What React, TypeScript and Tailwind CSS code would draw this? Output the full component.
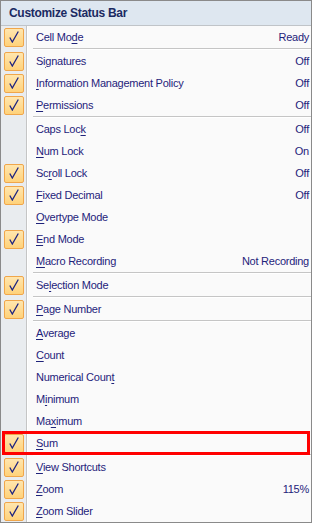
import React from "react";

type Item = {
  label: string;
  key: number; // index of underlined char
  value?: string;
  checked?: boolean;
  sep?: boolean; // separator after
  mark?: boolean;
};

const items: Item[] = [
  { label: "Cell Mode", key: 7, value: "Ready", checked: true, sep: true },
  { label: "Signatures", key: 2, value: "Off", checked: true },
  { label: "Information Management Policy", key: 0, value: "Off", checked: true },
  { label: "Permissions", key: 0, value: "Off", checked: true, sep: true },
  { label: "Caps Lock", key: 8, value: "Off" },
  { label: "Num Lock", key: 0, value: "On" },
  { label: "Scroll Lock", key: 2, value: "Off", checked: true },
  { label: "Fixed Decimal", key: 0, value: "Off", checked: true },
  { label: "Overtype Mode", key: 0 },
  { label: "End Mode", key: 0, checked: true },
  { label: "Macro Recording", key: 0, value: "Not Recording", sep: true },
  { label: "Selection Mode", key: 2, checked: true, sep: true },
  { label: "Page Number", key: 0, checked: true, sep: true },
  { label: "Average", key: 0 },
  { label: "Count", key: 0 },
  { label: "Numerical Count", key: 14 },
  { label: "Minimum", key: 1 },
  { label: "Maximum", key: 2 },
  { label: "Sum", key: 0, checked: true, sep: true, mark: true },
  { label: "View Shortcuts", key: 0, checked: true },
  { label: "Zoom", key: 0, value: "115%", checked: true },
  { label: "Zoom Slider", key: 0, checked: true },
];

function Label({ text, k }: { text: string; k: number }) {
  return (
    <span>
      {text.slice(0, k)}
      <span className="underline underline-offset-[2px]">{text.charAt(k)}</span>
      {text.slice(k + 1)}
    </span>
  );
}

function Check() {
  return (
    <div className="w-[20px] h-[19px] border border-[#f0a64a] rounded-[2px] bg-gradient-to-b from-[#ffe6ae] to-[#ffd27a] flex items-center justify-center">
      <svg width="10" height="12" viewBox="0 0 10 12">
        <polyline points="0.8,6.5 3.3,11 9.3,0.5" fill="none" stroke="#1d2380" strokeWidth="1.3" />
      </svg>
    </div>
  );
}

function Row({ item }: { item: Item }) {
  return (
    <div className="flex h-[22px]">
      <div className="w-[26px] shrink-0 bg-[#e9ecef] border-r border-[#c5c5c5] flex items-center pl-[3px]">
        {item.checked && <Check />}
      </div>
      <div className="flex-1 flex items-center justify-between pl-[8px] pr-[2px] border-l border-white">
        <Label text={item.label} k={item.key} />
        {item.value && <span>{item.value}</span>}
      </div>
    </div>
  );
}

function Separator() {
  return (
    <div className="flex h-[2px]">
      <div className="w-[26px] shrink-0 bg-[#e9ecef] border-r border-[#c5c5c5]" />
      <div className="flex-1 border-l border-white pl-[5px]">
        <div className="h-px bg-[#c5c5c5]" />
        <div className="h-px bg-white" />
      </div>
    </div>
  );
}

export default function App() {
  return (
    <div className="w-[313px] h-[524px] bg-white">
      <div className="w-[312px] h-[523px] border border-[#8a8a8a] bg-[#fafafa] text-[11px] tracking-[-0.25px] text-[#1f237a] font-['Liberation_Sans',Arial,sans-serif] overflow-hidden">
        <div className="h-[25px] bg-[#dee7f0] border-b border-[#c0c4c8] flex items-center pl-[8px]">
          <span className="text-[12px] font-bold tracking-[-0.3px] text-[#1b2a62]">Customize Status Bar</span>
        </div>
        {items.map((item) => (
          <div key={item.label} className={item.mark ? "relative" : ""}>
            <Row item={item} />
            {item.sep && <Separator />}
            {item.mark && (
              <div className="absolute left-[1px] right-px top-[-1px] h-[24px] border-[3px] border-[#ff0000]" />
            )}
          </div>
        ))}
      </div>
    </div>
  );
}
